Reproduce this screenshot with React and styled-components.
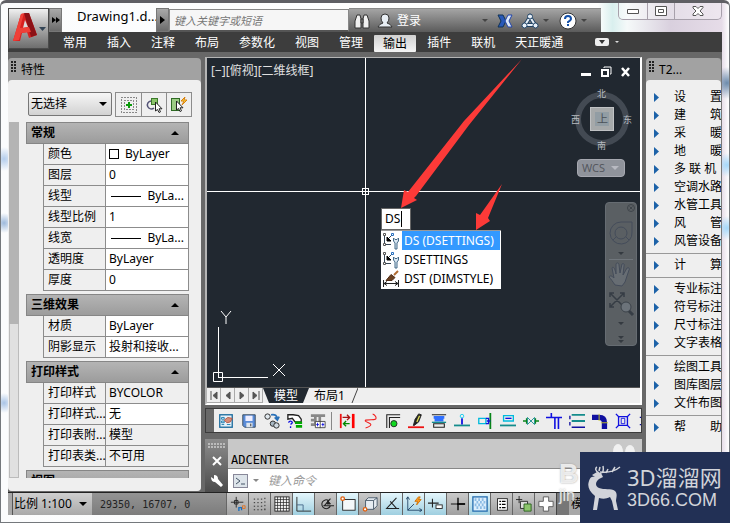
import React from 'react'
import styled, { createGlobalStyle, css } from 'styled-components'

const GlobalStyle = createGlobalStyle`
  * { box-sizing: border-box; }
  body {
    margin: 0;
    font: 12px/18px "Noto Sans", "Noto Sans CJK SC", sans-serif;
    color: #000;
  }
  button, input, select {
    font: inherit;
    color: inherit;
    margin: 0;
    padding: 0;
    border: 0;
    background: none;
    border-radius: 0;
  }
  svg { display: block; flex: none; }
`

const Window = styled.div`
  height: 100vh;
  display: flex;
  flex-direction: column;
  overflow: hidden;
  border: 1px solid #74787c;
  border-top: 3px solid #5f5f64;
  border-radius: 6px 6px 0 0;
  padding: 0 7px 7px;
  background:
    radial-gradient(circle at 3px 156px, #b4cdec 0, transparent 12px),
    radial-gradient(circle at 3px 220px, #9db9dc 0, transparent 10px),
    radial-gradient(circle at 3px 400px, #a9c4e6 0, transparent 10px),
    radial-gradient(circle at 726px 80px, #6c8bab 0, transparent 16px),
    radial-gradient(circle at 726px 162px, #a4d8fa 0, transparent 12px),
    radial-gradient(circle at 726px 225px, #a4d8fa 0, transparent 12px),
    linear-gradient(90deg, #fbfcfd 0, #fff 60%, #fff 82%, #d9efee 84%, #f5f9f9 86%, #d9d0de 92%, #e6dce8 99%, #fff 100%);
`

const Header = styled.header`
  display: grid;
  grid-template-columns: 41px 1fr;
  grid-template-rows: 29px 20px;
  flex: none;
`

const LogoButton = styled.button`
  grid-area: 1 / 1 / 3 / 2;
  z-index: 1;
  height: 41px;
  margin-top: 5px;
  border: 1px solid #4a4a4a;
  background: linear-gradient(#f0f0f0, #a8a8a8 50%, #6e6e6e);
`

const TitleRow = styled.div`
  grid-area: 1 / 2;
  display: flex;
  align-items: flex-end;
`

const DarkArrow = styled.button`
  flex: none;
  width: 13px;
  height: 24px;
  display: flex;
  align-items: center;
  justify-content: center;
  border: 1px solid #777;
  background: linear-gradient(#a9a9a9, #6b6b6b);
`

const DocTitle = styled.h1`
  flex: none;
  width: 94px;
  margin: 0;
  height: 25px;
  padding-left: 15px;
  font-size: 13px;
  font-weight: 400;
  line-height: 18px;
  white-space: nowrap;
`

const Search = styled.input`
  flex: 0 1 180px;
  min-width: 60px;
  height: 23px;
  padding: 0 4px;
  background: #f6f6f6;
  border: 1px solid #888;
  border-bottom: 2px solid #555;
  font-size: 11px;
  font-style: italic;
  &::placeholder { color: #777; opacity: 1; }
`

const InfoBar = styled.div`
  flex: 0 1 252px;
  height: 24px;
  padding: 0 4px;
  display: flex;
  align-items: center;
  color: #fff;
  background: linear-gradient(#a4a4a4, #5b5b5b);
  border-top: 1px solid #8a8a8a;
`

const InfoButton = styled.button`
  display: flex;
  align-items: center;
  justify-content: center;
  width: ${p => p.$w || 24}px;
  gap: 4px;
  white-space: nowrap;
`

const Spacer = styled.div`
  flex: 1;
`

const WindowButtons = styled.div`
  display: flex;
  align-self: flex-start;
  height: 17px;
  border: 1px solid #a7a0ab;
  border-top: 0;
  border-radius: 0 0 5px 5px;
  overflow: hidden;
`

const WindowButton = styled.button`
  width: ${p => p.$w}px;
  display: flex;
  align-items: center;
  justify-content: center;
  background: rgba(255, 255, 255, 0.3);
  & + & { border-left: 1px solid #a7a0ab; }
`

const MenuBar = styled.nav`
  grid-area: 2 / 1 / 3 / 3;
  display: flex;
  gap: 20px;
  padding: 0 0 0 55px;
  background: #3d3d3d;
`

const MenuItem = styled.button`
  height: 20px;
  line-height: 22px;
  color: #fff;
  white-space: nowrap;
  ${p => p.$active && css`
    margin: 3px -9px 0;
    padding: 0 9px;
    height: 17px;
    line-height: 16px;
    color: #000;
    background: linear-gradient(#d0d0d0, #f4f4f4);
    border-radius: 1px;
  `}
`

const RibbonToggle = styled.button`
  display: flex;
  align-items: center;
  gap: 6px;
  margin-left: 12px;
`

const Workspace = styled.main`
  flex: 1;
  min-height: 0;
  display: flex;
  gap: 4px;
  padding-top: 5px;
  background: #686868;
`

const Palette = styled.aside`
  flex: 0 0 ${p => p.$w}px;
  margin: 1px 0;
  display: flex;
  flex-direction: column;
  background: #a2a2a2;
  border-radius: 4px;
  overflow: hidden;
`

const PaletteTitle = styled.h2`
  margin: 0;
  height: 22px;
  flex: none;
  display: flex;
  gap: 5px;
  padding: 3px 3px 0;
  font-size: 12px;
  font-weight: 400;
  line-height: 18px;
`

const Grip = styled.span`
  width: ${p => p.$w || 5}px;
  height: ${p => p.$h || 12}px;
  background: radial-gradient(circle at 1px 1px, ${p => p.$c || '#222'} 0, ${p => p.$c || '#222'} 1px, transparent 1px) 0 0 / 3px 3px;
`

const PaletteBody = styled.div`
  flex: 1;
  min-height: 0;
  display: flex;
  flex-direction: column;
  background: #efefef;
  border-radius: 4px 4px 0 0;
`

const SelectionRow = styled.div`
  display: flex;
  gap: 3px;
  padding: 12px 9px 5px 20px;
`

const SelectBox = styled.span`
  flex: 1;
  height: 24px;
  display: flex;
  align-items: center;
  padding-right: 4px;
  border: 1px solid #777;
  border-radius: 2px;
  background: linear-gradient(#f6f6f6, #d2d2d2);
`

const Select = styled.select`
  flex: 1;
  padding-left: 2px;
  appearance: none;
  outline: 0;
`

const IconGroup = styled.div`
  display: flex;
  border: 1px solid #8c8c8c;
`

const IconButton = styled.button`
  width: 25px;
  height: 23px;
  display: flex;
  align-items: center;
  justify-content: center;
  & + & { border-left: 1px solid #8c8c8c; }
`

const Scroll = styled.div`
  flex: 1;
  min-height: 0;
  display: flex;
  gap: 7px;
  margin: 0 12px 13px 1px;
  overflow: hidden;
`

const Track = styled.div`
  width: 10px;
  background: #e0e0e0;
  border: 1px solid #bbb;
`

const Thumb = styled.div`
  height: 57%;
  margin: -1px;
  background: #b4b4b4;
`

const Groups = styled.div`
  flex: 1;
  display: flex;
  flex-direction: column;
  gap: 3px;
`

const GroupHeader = styled.button`
  width: 100%;
  height: 22px;
  display: flex;
  align-items: center;
  justify-content: space-between;
  padding: 0 9px 0 4px;
  font-weight: 700;
  border: 1px solid #868686;
  background: linear-gradient(#b4b4b4, #9c9c9c);
`

const Props = styled.table`
  width: calc(100% - 17px);
  margin-left: 17px;
  table-layout: fixed;
  border-collapse: separate;
  border-spacing: 0;
  border-left: 1px solid #8c8c8c;
`

const Cell = styled.td`
  height: 21px;
  padding: 0 4px 0 3px;
  line-height: 18px;
  white-space: nowrap;
  border-right: 1px solid #8c8c8c;
  border-bottom: 1px solid #8c8c8c;
  background: ${p => p.$muted ? '#efefef' : '#fff'};
`

const Label = styled(Cell).attrs({ as: 'th', scope: 'row' })`
  width: 62px;
  padding: 0 0 0 4px;
  font-weight: 400;
  text-align: left;
  background: #efefef;
`

const Value = styled.span`
  display: flex;
  align-items: center;
  gap: 6px;
`

const Swatch = styled.span`
  width: 10px;
  height: 10px;
  border: 1px solid #000;
`

const LineSample = styled.span`
  width: 31px;
  height: 1px;
  margin-left: 2px;
  background: #000;
`

const Center = styled.section`
  flex: 1;
  min-width: 0;
  display: flex;
  flex-direction: column;
`

const Viewport = styled.div`
  flex: 1;
  min-height: 0;
  display: flex;
  flex-direction: column;
  border: 2px solid #b5b5b5;
  border-top-width: 1px;
  border-right-color: #fff;
  border-bottom-color: #fff;
`

const Canvas = styled.div`
  position: relative;
  flex: 1;
  min-height: 0;
  background: #212830;
  overflow: hidden;
`

const Drawing = styled.svg`
  position: absolute;
  inset: 0;
  width: 100%;
  height: 100%;
`

const Ucs = styled.svg`
  position: absolute;
  left: 5px;
  bottom: 4px;
`

const ViewLabel = styled.div`
  position: absolute;
  left: 4px;
  top: 4px;
  color: #e0e0e0;
`

const ViewButtons = styled.div`
  position: absolute;
  right: 8px;
  top: 8px;
  display: flex;
  gap: 8px;
`

const Compass = styled.div`
  position: absolute;
  right: 7px;
  top: 29px;
`

const Wcs = styled.button`
  position: absolute;
  right: 15px;
  top: 101px;
  width: 48px;
  height: 18px;
  display: flex;
  align-items: center;
  justify-content: space-between;
  padding: 0 5px 0 4px;
  font-size: 11px;
  color: #55585f;
  background: #8f939b;
  border: 1px solid #a6a8b0;
  border-radius: 4px;
`

const NavBar = styled.div`
  position: absolute;
  right: 3px;
  top: 144px;
  width: 32px;
  height: 144px;
  background: #5a5f63;
  border: 1px solid #666c72;
  border-radius: 4px;
`

const CommandPopup = styled.div`
  position: absolute;
  left: 174px;
  top: 150px;
  width: 120px;
`

const DynBox = styled.div`
  display: flex;
  align-items: center;
  width: 30px;
  height: 22px;
  padding-left: 3px;
  background: #fff;
  border: 1px solid #666;
`

const DynInput = styled.input`
  width: 16px;
  height: 18px;
  outline: 0;
  caret-color: transparent;
`

const TextCaret = styled.span`
  width: 1px;
  height: 16px;
  background: #000;
`

const Suggestions = styled.ul`
  margin: 0;
  padding: 0 1px 1px;
  list-style: none;
  background: #fff;
  border-top: 1px solid #999;
`

const Suggestion = styled.li`
  display: flex;
  align-items: center;
  gap: 2px;
  height: 19px;
`

const SuggestionText = styled.button`
  flex: 1;
  height: 19px;
  padding-left: 2px;
  line-height: 18px;
  text-align: left;
  white-space: nowrap;
  color: ${p => p.$active ? '#fff' : '#000'};
  background: ${p => p.$active ? '#3399ff' : 'none'};
`

const Tabs = styled.div`
  flex: none;
  display: flex;
  height: 16px;
  background: #efefef;
  border-top: 1px solid #555;
`

const TabNav = styled.button`
  width: 14px;
  display: flex;
  align-items: center;
  justify-content: center;
  border: 1px solid #aaa;
  border-width: 0 1px 1px 0;
`

const ModelTab = styled.button`
  width: 46px;
  line-height: 15px;
  color: #fff;
  background: #212830;
  clip-path: polygon(0 0, 100% 0, calc(100% - 6px) 100%, 6px 100%);
`

const LayoutTab = styled.button`
  display: flex;
  gap: 6px;
  padding-left: 5px;
  line-height: 15px;
`

const Toolbar = styled.div`
  flex: none;
  display: flex;
  align-items: center;
  height: 25px;
  margin-top: 3px;
  background: #ededed;
  border: 1px solid #3c3c3c;
  overflow: hidden;
`

const ToolGrip = styled.div`
  flex: none;
  width: 8px;
  height: 100%;
  padding: 3px 1px;
  background: #686868;
`

const Tool = styled.button`
  flex: none;
  width: 23px;
  height: 23px;
  display: flex;
  align-items: center;
  justify-content: center;
`

const ToolSeparator = styled.div`
  flex: none;
  width: 1px;
  height: 18px;
  margin: 0 3px 0 2px;
  background: #888;
`

const CommandLine = styled.div`
  flex: none;
  display: grid;
  grid-template-columns: 23px 1fr;
  height: 53px;
  margin-top: 6px;
`

const CommandSide = styled.div`
  display: flex;
  flex-direction: column;
  align-items: center;
  gap: 8px;
  padding-top: 4px;
  background: linear-gradient(#8c8c8c, #4c4c4c);
`

const CommandMain = styled.div`
  display: flex;
  flex-direction: column;
  min-width: 0;
`

const History = styled.div`
  flex: 1;
  display: flex;
  align-items: flex-end;
  padding: 0 3px;
  background: #c8c8c8;
  border-bottom: 1px solid #888;
  font: 12px/16px "DejaVu Sans Mono", monospace;
`

const Prompt = styled.label`
  height: 23px;
  display: flex;
  align-items: center;
  gap: 5px;
  padding: 0 5px;
  background: #fff;
`

const PromptInput = styled.input`
  flex: 1;
  min-width: 0;
  padding-left: 4px;
  font-style: italic;
  &::placeholder { color: #999; opacity: 1; }
`

const MenuPalette = styled(Palette)`
  margin-bottom: 0;
  border-right: 1px solid #777;
`

const MenuList = styled.ul`
  margin: 0;
  padding: 8px 0;
  list-style: none;
`

const MenuEntry = styled.li`
  ${p => p.$rule && css`
    margin-top: 3px;
    padding-top: 2px;
    border-top: 1px solid #999;
  `}
`

const EntryButton = styled.button`
  display: flex;
  align-items: center;
  gap: 14px;
  height: 18px;
  padding-left: 8px;
  white-space: pre;
`

const StatusBar = styled.footer`
  flex: none;
  height: 23px;
  display: flex;
  overflow: hidden;
  background: #a8a8a8;
  border-top: 1px solid #222;
`

const Scale = styled.button`
  display: flex;
  align-items: center;
  gap: 7px;
  width: 80px;
  margin-left: 4px;
  padding-left: 1px;
  white-space: nowrap;
  background: linear-gradient(#cfcfcf, #a9a9a9);
  border-left: 1px solid #555;
`

const Coords = styled.output`
  flex: 0 0 134px;
  padding-left: 8px;
  font: 10px/24px "DejaVu Sans Mono", monospace;
  white-space: pre;
  color: #222;
  background: linear-gradient(#949494, #7c7c7c);
`

const StatusButton = styled.button`
  flex: none;
  width: 22px;
  display: flex;
  align-items: center;
  justify-content: center;
  border-left: 1px solid #666;
  background: ${p => p.$on ? 'linear-gradient(#e4f6fc, #9fcfe0)' : 'linear-gradient(#cacaca, #a0a0a0)'};
`

const StatusText = styled.button`
  padding-left: 2px;
  white-space: nowrap;
`

const StatusGap = styled.div`
  flex: 0 0 13px;
  background: #777;
  border-left: 1px solid #444;
`

const Ghost = styled.div`
  position: absolute;
  right: 151px;
  bottom: 17px;
  width: 20px;
  color: rgba(255, 255, 255, 0.8);
  font: 700 27px/24px "Liberation Sans", sans-serif;
  text-shadow: 0 0 2px #999;
`

const GhostSmall = styled.div`
  font: 16px/20px "Liberation Sans", sans-serif;
`

const GhostPaw = styled.svg`
  position: absolute;
  right: 94px;
  bottom: 60px;
`

const Brand = styled.div`
  position: absolute;
  right: 0;
  bottom: 0;
  width: 150px;
  height: 71px;
  display: flex;
  align-items: center;
  gap: 5px;
  padding-left: 8px;
  color: #d2d4da;
  background: #223055;
  overflow: hidden;
`

const BrandName = styled.div`
  font: 22px/25px "Noto Sans", "Noto Sans CJK SC", sans-serif;
  white-space: nowrap;
`

const BrandUrl = styled.div`
  font: 18px/20px "Liberation Sans", sans-serif;
`

const Caret = ({ color = '#000', size = 8, up }) => (
  <svg width={size} height={size / 2} viewBox='0 0 8 4'>
    <path d={up ? 'M0 4L4 0l4 4z' : 'M0 0h8L4 4z'} fill={color} />
  </svg>
)

const Icon = ({ children, size = 18 }) => (
  <svg width={size} height={size} viewBox='0 0 18 18' fill='none' stroke='#222'>{children}</svg>
)

const Plus = () => (
  <Icon>
    <rect x='1.5' y='1.5' width='15' height='15' strokeDasharray='1 2' />
    <rect x='4.5' y='4.5' width='9' height='9' strokeDasharray='1 2' />
    <path d='M9 6v6M6 9h6' stroke='#0a9a0a' strokeWidth='2' />
  </Icon>
)

const PickObjects = () => (
  <Icon>
    <path d='M6 5a4 4 0 1 0 3 7' stroke='#557' strokeWidth='1.5' />
    <rect x='6.5' y='2.5' width='6' height='6' fill='#8cc46c' stroke='#3b7a2a' />
    <path d='M10.5 6v9l2-1.500 1.500 3 1.500-.7-1.500-3H17z' fill='#fff' />
  </Icon>
)

const QuickSelect = () => (
  <Icon>
    <rect x='1.5' y='2.5' width='8' height='12' fill='#9ccc84' stroke='#2e6a24' />
    <path d='M15 1l-4 4h3l-2 4 5-5h-3z' fill='#ffe040' stroke='#d88010' />
    <path d='M6.5 5v9l2-1.500 1.500 3 1.500-.7-1.500-3H13z' fill='#fff' />
  </Icon>
)

const groups = [
  {
    title: '常规',
    rows: [
      ['颜色', <><Swatch />ByLayer</>],
      ['图层', '0'],
      ['线型', <><LineSample />ByLa...</>],
      ['线型比例', '1'],
      ['线宽', <><LineSample />ByLa...</>],
      ['透明度', 'ByLayer'],
      ['厚度', '0']
    ]
  },
  {
    title: '三维效果',
    rows: [['材质', 'ByLayer'], ['阴影显示', '投射和接收...']]
  },
  {
    title: '打印样式',
    rows: [
      ['打印样式', 'BYCOLOR', true],
      ['打印样式...', '无'],
      ['打印表附...', '模型', true],
      ['打印表类...', '不可用', true]
    ]
  },
  { title: '视图', rows: [] }
]

const menus = ['常用', '插入', '注释', '布局', '参数化', '视图', '管理', '输出', '插件', '联机', '天正暖通']

const entries = [
  ['设\u3000\u3000置'], ['建\u3000\u3000筑'], ['采\u3000\u3000暖'], ['地\u3000\u3000暖'],
  ['多 联 机'], ['空调水路'], ['水管工具'], ['风\u3000\u3000管'], ['风管设备'],
  ['计\u3000\u3000算', true],
  ['专业标注', true], ['符号标注'], ['尺寸标注'], ['文字表格'],
  ['绘图工具', true], ['图库图层'], ['文件布图'],
  ['帮\u3000\u3000助', true]
]

const teal = '#148c8c'
const blue = '#1010e0'

const tools = [
  ['图纸', <><rect x='2' y='2' width='14' height='14' fill='#e8f2fa' stroke='#1a6a9c' strokeWidth='1.5' /><path d='M4 5h3v2H4zM4 9h3v2H4zM4 13h3M10 13h4' stroke='#17a' /><path d='M7 8l4-3 5 1-2 4-4 1z' fill='#d88c78' stroke='#a54' /></>],
  ['保存', <><path d='M2 2h14v14H4l-2-2z' fill='#5a8cd8' stroke='#345' /><rect x='5' y='3' width='8' height='6' fill='#eef' stroke='none' /><rect x='6' y='11' width='7' height='5' fill='#dfe6ee' stroke='none' /><path d='M11 12v3' /></>],
  ['替换', <><circle cx='4' cy='4' r='3' fill='#e0e8ee' /><circle cx='10' cy='12' r='3' fill='#a8b8c4' /><circle cx='14' cy='14' r='3' fill='#d0dae2' /><path d='M8 2c4-1 7 1 7 5m-3-2l3 3 2-4' stroke='#2870b8' strokeWidth='2' /></>],
  ['查询', <><path d='M1 7V2h6l6 1 3 4v3H9L6 6z' fill='#fff' strokeWidth='1.5' /><path d='M9 11h8M10 15h7' stroke='#0a0' strokeWidth='3' /><path d='M2 11c0-3 4-2 4 0l-2 2m0 2v2' stroke={blue} strokeWidth='1.5' /></>],
  ['表格', <><path d='M1 3h16M1 8h5m5-6v8M6 3v9M1 13h5' stroke='#888' strokeWidth='3' /><path d='M6 9.500h11v7H6zM11.500 9v8' fill='#fff' stroke='#444' /><path d='M7 13h3m3 0h3m-7.500-2v4m6-4v4' stroke={blue} /></>],
  ['对齐', <><path d='M2 1v16' stroke='#e11' strokeWidth='2' /><path d='M16 1v16' stroke='#f00' strokeWidth='3' /><path d='M4 5h8M9 2l3 3-3 3' stroke='#a11' strokeWidth='1.5' /><path d='M12 12H5m3-3l-3 3 3 3' stroke='#080' strokeWidth='1.5' /></>],
  ['曲线', <path d='M12 1c3 1 5 5 3 6s-7 0-11 1c-2 2 6 3 6 5s-3 3-6 4' stroke='#f02020' strokeWidth='1.2' />],
  ['墙角', <><path d='M2 17V2h15M5 17V5h12' strokeWidth='1.2' /><circle cx='10' cy='12' r='3.5' fill='#10d820' /></>],
  ['标记', <><path d='M0 16h18' stroke='#e11' strokeWidth='2' /><path d='M6 14l2-7 4-6 3 1-3 8-5 4z' fill='#222' /><path d='M13 3l-3 7' stroke='#dd5' strokeWidth='1.5' /></>],
  ['设备', <><path d='M1 2h16M3 12h12v4H3z' strokeWidth='1.2' /><path d='M3 5h12M4 8h10' stroke='#3070ff' strokeWidth='3' /><path d='M1 10.500h16' stroke={teal} strokeWidth='1.5' /></>],
  ['立管', <><path d='M0 14h18' stroke={teal} strokeWidth='2' /><path d='M9 13V6' stroke={blue} strokeWidth='2' /><circle cx='9' cy='3.5' r='2' stroke='#1ce' /></>],
  ['侧接', <><path d='M15 0v18' stroke='#088418' strokeWidth='2' /><path d='M2 6h8v6H2z' stroke='#0bd' strokeWidth='1.5' /><path d='M10 6h3v6h-3M11 9h4' stroke={blue} strokeWidth='1.5' /></>],
  ['平接', <><path d='M0 14h18' stroke={teal} strokeWidth='2' /><path d='M4 3h11v6H4z' stroke='#0bd' strokeWidth='1.5' /><path d='M6 6h7' stroke={blue} strokeWidth='1.5' /></>],
  ['阀门', <><path d='M0 9h5m8 0h5M4 6v6m10-6v6' stroke='#088418' strokeWidth='1.5' /><path d='M5 5v8l8-8v8z' stroke={teal} /></>],
  ['三通', <path d='M0 5h18M6 0v5h4v13M14 5v13' stroke={blue} strokeWidth='1.8' />],
  ['管线', <><path d='M3 2h15M3 9h15' stroke={teal} strokeWidth='2' /><path d='M3 16h15M1 3v4m0 3v4' stroke='#1010a0' strokeWidth='1.5' /></>],
  ['弯头', <><path d='M0 5h8q6 0 6 6v7' stroke='#1010a0' strokeWidth='6' /><path d='M8 1v8M10 11h8' stroke='#cc2' /></>],
  ['风口', <><path d='M4 4h10v10H4zM1 1l4 4m12-4l-4 4M1 17l4-4m12 4l-4-4' stroke={blue} strokeWidth='1.5' /><path d='M7 6h4v6H7z' stroke={blue} /></>],
  ['更多', <path d='M2 5h15M2 13h15' stroke='#1010a0' strokeWidth='1.5' />]
]

const statusTools = [
  ['推断约束', false, <><path d='M1 7h14M7 1v12M5 5h4v4H5z' /><path d='M10 17v-4h3v3' stroke='#1b6fc0' strokeWidth='1.5' /><path d='M14 11h3v3h-3z' stroke='#e07020' /></>],
  ['捕捉', false, <path d='M2 3.500h10M2 7.500h10M2 11.500h10M2 15.500h13M14.500 2v14' strokeDasharray='1.5 2.500' />],
  ['栅格', false, <><rect x='1' y='1' width='16' height='16' fill='#f4f4f4' /><path d='M4 1v16M7.300 1v16M10.600 1v16M14 1v16M1 4h16M1 7.300h16M1 10.600h16M1 14h16' strokeWidth='.8' /></>],
  ['正交', true, <><path d='M1 1v16h16' /><path d='M1 10h7v7' stroke='#468' /></>],
  ['极轴', false, <><path d='M12 5a5 5 0 1 0 2 6M6 11h12M7 11l7-8' strokeWidth='1.2' /><path d='M11 5l3 4h-4z' fill='#222' /></>],
  ['对象捕捉', true, <><rect x='3' y='4' width='14' height='12' fill='#f4f8fa' /><circle cx='3' cy='3' r='2' fill='#fff' stroke='#e06010' strokeWidth='1.5' /></>],
  ['三维捕捉', false, <><path d='M4 5l3-3h10v9l-4 4H4z' fill='#e6ecf2' stroke='#456' /><path d='M4 5h9v10M13 5l4-3' stroke='#456' /><circle cx='3.5' cy='15' r='2' stroke='#e06010' fill='#fff' strokeWidth='1.5' /></>],
  ['追踪', true, <path d='M14 2L3 14h14M7 6l7 8' strokeWidth='1.2' />],
  ['动态UCS', true, <><path d='M2 1v15h16M0 4l2-3 2 3M15 14l3 2-3 2M2 16L9 9' stroke='#246' /><path d='M14 1l-4 5h3l-1 4 5-6h-3l2-3z' fill='#ff9c20' stroke='#d07000' /></>],
  ['动态输入', true, <><path d='M0 8h12M5 3v10' strokeWidth='1.2' /><rect x='9' y='10' width='7' height='4' fill='#fff' /></>],
  ['线宽', false, <><path d='M1 9h7' stroke='#000' /><path d='M8 9h9' stroke='#000' strokeWidth='2' /><path d='M9 2v14' stroke='#000' strokeWidth='1.5' /></>],
  ['透明度', true, <><rect x='1' y='1' width='16' height='16' fill='#dceefc' stroke='#2870b0' strokeWidth='1.5' /><path d='M3 4h12M5 7h10M3 10h12M5 13h10' stroke='#8cbce4' strokeWidth='3' strokeDasharray='2 2' /></>],
  ['快捷特性', false, <><rect x='4' y='3' width='11' height='13' fill='#fff' /><path d='M6 6h2m1 0h4M6 9.500h2m1 0h4M6 13h2m1 0h4' stroke='#000' strokeWidth='1.5' /></>],
  ['选择循环', false, <><path d='M0 4h7M3.500 0v8' /><path d='M5 6h8v8H5z' fill='#ddd' /><path d='M9 9h8v8H9z' fill='#8cc46c' stroke='#28601c' /></>],
  ['注释监视', false, <path d='M6 1h6v5h5v6h-5v5H6v-5H1V6h5z' fill='#fff' stroke='#555' />]
]

const commands = [
  ['DS (DSETTINGS)', 'settings'],
  ['DSETTINGS', 'settings'],
  ['DST (DIMSTYLE)', 'dim']
]

const CommandIcon = ({ type }) => type === 'settings'
  ? (
    <Icon>
      <path d='M2.500 3v9.500H9M10 3L6 7' stroke='#345' />
      <path d='M5 5v4h4z' fill='#000' stroke='#000' />
      <path d='M1.500 1.500h2v2h-2zM1.500 11.500h2v2h-2z' fill='#fff' stroke='#555' />
      <path d='M9.500 1.500h2v2h-2z' fill='#fff' stroke='#2870c0' />
      <path d='M11.500 6v3l1.500 2v6h2v-6l1.500-2V6L15 7.500h-2z' fill='#dbe8f2' stroke='#456a88' />
    </Icon>
    )
  : (
    <Icon>
      <path d='M1.500 10v7M16.500 10v7M1 13.500h16M5 11.500l-3 2 3 2m8-4l3 2-3 2' />
      <path d='M4 10.500l5-6 4 3-3 3z' fill='#6a4020' stroke='#53301a' />
      <path d='M12 5l4-4' stroke='#b06a30' strokeWidth='2' />
    </Icon>
    )

const AppLogo = () => (
  <svg width='39' height='39' viewBox='0 0 39 39'>
    <path d='M4 32l8-27 8-1 8 22-8 3-2-6-5 1-2 8z' fill='#d82020' />
    <path d='M15 4h5l8 22-6 2z' fill='#8c1116' />
    <path d='M14 19l2-8 3 7z' fill='#ddd' />
    <path d='M4 32l8-27 3-1-4 15 9-1 2 5-10 1-2 7z' fill='#ef4038' />
    <path d='M30 18h7l-3.500 4z' fill='#345' />
  </svg>
)

const Ring = () => (
  <svg width='62' height='66' viewBox='0 0 62 66' fontFamily='Noto Sans CJK SC, sans-serif' fontSize='9' fill='#b8bcc0'>
    <circle cx='31' cy='32' r='24' fill='none' stroke='#434a53' strokeWidth='6' />
    <rect x='19.5' y='20.5' width='23' height='23' fill='#a6a9aa' stroke='#c0c2c4' />
    <rect x='24' y='25' width='14' height='14' fill='#929da4' />
    <text x='26' y='36' fontSize='11' fill='#4a5158'>上</text>
    <text x='26' y='10'>北</text>
    <text x='26' y='62'>南</text>
    <text x='0' y='36'>西</text>
    <text x='52' y='36'>东</text>
  </svg>
)

const NavIcons = () => (
  <svg width='30' height='142' viewBox='0 0 30 142' fill='none' stroke='#70767c'>
    <circle cx='25' cy='5' r='3.5' stroke='#3e444a' />
    <path d='M23.500 3.500l3 3m0-3l-3 3' stroke='#3e444a' />
    <path d='M15 19h11v10a11 11 0 1 1-11-10z' stroke='#444c5a' />
    <circle cx='15' cy='30' r='6' stroke='#444c5a' />
    <path d='M7 37l3-3m13 3l-3-3' stroke='#444c5a' />
    <path d='M12 49h6l-3 3z' fill='#343a40' stroke='none' />
    <path d='M3 56.500h24' />
    <path d='M9 82c-2-3-4-6-6-8 1-2 3-1 5 1L6 65c1-2 3 0 4 6l0-10c1-2 3-1 3 1l1 8 2-9c1-1 3 0 2 2l-1 9 4-7c2-1 3 1 2 2l-4 12-3 4z' fill='#676d73' stroke='#444c5a' />
    <path d='M4 90l14 14M18 90L4 104M4 94v-4h4m6 0h4v4M4 100v4h4' stroke='#363d45' strokeWidth='1.5' />
    <circle cx='20' cy='104' r='5' fill='#6c737a' stroke='#3c434a' />
    <path d='M23 108l4 4' stroke='#363d45' strokeWidth='3' />
    <path d='M12 119h6l-3 3zM12 133h6l-3 3zM12 137h6l-3 3z' fill='#343a40' stroke='none' />
  </svg>
)

const Deer = () => (
  <svg width='34' height='46' viewBox='0 0 34 46' fill='#d2d4da'>
    <path d='M4 10l5-3 4 1 2 4-4 2c-4 3-4 7 0 9 5 2 12 0 16 3 3 3 1 7 1 10l2 9h-4l-2-9-2-4c-4 2-7 2-11 1l-2 12H5l2-14c-6-5-8-10-6-15 1-4 3-5 6-4z' />
    <path d='M11 8C7 6 7 3 9 2m3 6c3 0 4-2 3-7m-3 6c8 1 14 0 20-5M18 8l2-4m4 3l3-5M11 6l1-4' fill='none' stroke='#d2d4da' strokeWidth='1.5' />
  </svg>
)

const Properties = () => (
  <Palette $w={193}>
    <PaletteTitle><Grip />特性</PaletteTitle>
    <PaletteBody>
      <SelectionRow>
        <SelectBox>
          <Select aria-label='选择对象'><option>无选择</option></Select>
          <Caret />
        </SelectBox>
        <IconGroup>
          <IconButton aria-label='PICKADD'><Plus /></IconButton>
          <IconButton aria-label='选择对象'><PickObjects /></IconButton>
          <IconButton aria-label='快速选择'><QuickSelect /></IconButton>
        </IconGroup>
      </SelectionRow>
      <Scroll>
        <Track><Thumb /></Track>
        <Groups>
          {groups.map(group => (
            <section key={group.title}>
              <GroupHeader>{group.title}<Caret up /></GroupHeader>
              <Props>
                <tbody>
                  {group.rows.map(([label, value, muted]) => (
                    <tr key={label}>
                      <Label>{label}</Label>
                      <Cell $muted={muted}><Value>{value}</Value></Cell>
                    </tr>
                  ))}
                </tbody>
              </Props>
            </section>
          ))}
        </Groups>
      </Scroll>
    </PaletteBody>
  </Palette>
)

const Model = () => (
  <Canvas>
    <ViewLabel>[−][俯视][二维线框]</ViewLabel>
    <ViewButtons>
      <svg width='12' height='12'><path d='M1 7h10v3H1z' fill='#fff' /></svg>
      <svg width='12' height='12' fill='none' stroke='#fff'><path d='M4 2V1h7v7h-1' /><path d='M2 4h6v6H2z' strokeWidth='2' /></svg>
      <svg width='12' height='12'><path d='M2 2l7 8M9 2l-7 8' stroke='#fff' strokeWidth='2.5' /></svg>
    </ViewButtons>
    <Compass><Ring /></Compass>
    <Wcs>WCS<Caret color='#b8bac2' /></Wcs>
    <NavBar><NavIcons /></NavBar>
    <Ucs width='84' height='76' fill='none' stroke='#fff'>
      <path d='M1.500 65.500h9v9h-9zM6.500 70V20M6 70.500h50M9 4l5 6 5-6M14 10v7M61 57l12 12M73 57L61 69' />
    </Ucs>
    <Drawing stroke='#fff' fill='none' shapeRendering='crispEdges'>
      <line x1='158.5' x2='158.5' y1='0' y2='100%' />
      <line x1='0' x2='100%' y1='133.5' y2='133.5' />
      <rect x='155.5' y='130.5' width='6' height='6' />
    </Drawing>
    <CommandPopup>
      <DynBox>
        <DynInput aria-label='命令' defaultValue='DS' />
        <TextCaret />
      </DynBox>
      <Suggestions>
        {commands.map(([text, type], i) => (
          <Suggestion key={text}>
            <CommandIcon type={type} />
            <SuggestionText $active={i === 0}>{text}</SuggestionText>
          </Suggestion>
        ))}
      </Suggestions>
    </CommandPopup>
    <Drawing fill='#fc3a38' pointerEvents='none'>
      <path d='M194 150l3-18 4 2 56-71L315 1l-53 66-53 71-2 2 3 2zM269 172v-17l4 2 22-31-14 34 2 3z' />
    </Drawing>
  </Canvas>
)

const App = () => (
  <Window>
    <GlobalStyle />
    <Header>
      <LogoButton aria-label='AutoCAD'><AppLogo /></LogoButton>
      <TitleRow>
        <DarkArrow aria-label='快速访问'><svg width='8' height='6'><path d='M0 0l4 3-4 3zM4 0l4 3-4 3z' /></svg></DarkArrow>
        <DocTitle>Drawing1.d...</DocTitle>
        <DarkArrow aria-label='展开'><svg width='5' height='8'><path d='M0 0l5 4-5 4z' /></svg></DarkArrow>
        <Search aria-label='搜索' placeholder='键入关键字或短语' />
        <InfoBar>
          <InfoButton $w={18} aria-label='查找'>
            <svg width='16' height='16' fill='#f0f0f0' stroke='#333'><path d='M3 2h3l1 4v9H1V8zM10 2h3l2 6v7H9V6zM7 6h2v4H7z' /></svg>
          </InfoButton>
          <InfoButton $w={56}>
            <svg width='16' height='16' fill='#e8eef4' stroke='#333'><path d='M1 14q1-3 5-4Q4 8 4 5q0-4 4-4t4 4q0 3-2 5 4 1 5 4z' /></svg>
            登录
          </InfoButton>
          <Spacer />
          <InfoButton $w={8} aria-label='账户'><Caret color='#444' size={6} /></InfoButton>
          <InfoButton $w={32} aria-label='Exchange'>
            <svg width='16' height='14'><path d='M1 1h5l3 6-3 6H1l3-6z' fill='#2858b8' stroke='#135' /><path d='M15 1h-4L8 7l3 6h4l-3-6z' fill='#dce8f8' stroke='#24a' /></svg>
          </InfoButton>
          <InfoButton $w={28} aria-label='联网'>
            <svg width='18' height='16' fill='#e8f0f8' stroke='#246'><path d='M9 4L4 12h10z' fill='none' stroke='#246' strokeWidth='4' /><path d='M9 4L4 12h10z' fill='none' stroke='#e8f0f8' strokeWidth='2' /><circle cx='9' cy='3.5' r='2.5' /><circle cx='3.5' cy='12.5' r='2.5' /><circle cx='14.5' cy='12.5' r='2.5' /></svg>
            <Caret color='#444' size={6} />
          </InfoButton>
          <InfoButton $w={48} aria-label='帮助'>
            <svg width='18' height='18'><circle cx='9' cy='9' r='8' fill='#fff' stroke='#333' /><path d='M6 7q0-3 3-3t3 3q0 1-3 3v1' fill='none' stroke='#1450a8' strokeWidth='2' /><path d='M8 12h2v2H8z' fill='#1450a8' /></svg>
            <Caret color='#444' size={6} />
          </InfoButton>
        </InfoBar>
        <Spacer />
        <WindowButtons>
          <WindowButton $w={28} aria-label='最小化'><svg width='12' height='5'><path d='M.5.500h11v4H.5z' fill='#fff' stroke='#555' /></svg></WindowButton>
          <WindowButton $w={27} aria-label='最大化'><svg width='12' height='10' fill='#fff' stroke='#555'><path d='M.5.500h11v9H.5z' /><path d='M3.500 3.500h5v3h-5z' /></svg></WindowButton>
          <WindowButton $w={47} aria-label='关闭'><svg width='12' height='10'><path d='M1 .5h3l2 2 2-2h3v1L8 5l3 3v1.500H8l-2-2-2 2H1V8l3-3-3-3z' fill='#fff' stroke='#555' /></svg></WindowButton>
        </WindowButtons>
      </TitleRow>
      <MenuBar>
        {menus.map(name => <MenuItem key={name} $active={name === '输出'}>{name}</MenuItem>)}
        <RibbonToggle aria-label='功能区'>
          <svg width='14' height='8'><rect width='14' height='8' rx='2' fill='#eee' /><path d='M4 2h6L7 6z' fill='#333' /></svg>
          <Caret color='#ddd' size={4} />
        </RibbonToggle>
      </MenuBar>
    </Header>

    <Workspace>
      <Properties />
      <Center>
        <Viewport>
          <Model />
          <Tabs>
            {['M1 0v9M7 1L3 4.500 7 8z', 'M6 1L2 4.500 6 8z', 'M2 1l4 3.500L2 8z', 'M1 1l4 3.500L1 8zM7 0v9'].map((d, i) => (
              <TabNav key={d} aria-label={['首个', '上一个', '下一个', '末个'][i]}>
                <svg width='8' height='9' fill='#555' stroke='#555'><path d={d} /></svg>
              </TabNav>
            ))}
            <ModelTab>模型</ModelTab>
            <LayoutTab>布局1<svg width='7' height='15' stroke='#444'><path d='M7 0L1 15' /></svg></LayoutTab>
          </Tabs>
        </Viewport>
        <Toolbar>
          <ToolGrip><Grip $h={15} /></ToolGrip>
          {tools.map(([name, art], i) => (
            <React.Fragment key={name}>
              {i === 5 && <ToolSeparator />}
              <Tool aria-label={name}><Icon size={16}>{art}</Icon></Tool>
            </React.Fragment>
          ))}
        </Toolbar>
        <CommandLine>
          <CommandSide>
            <Grip $w={17} $h={5} $c='#bbb' />
            <svg width='10' height='10'><path d='M1 1l8 8M9 1L1 9' stroke='#fff' strokeWidth='2' /></svg>
            <svg width='14' height='14'><path d='M1 3l3 2V1q4 0 4 4l5 6-2 2-6-5q-4 0-4-5z' fill='#fff' /></svg>
          </CommandSide>
          <CommandMain>
            <History>ADCENTER</History>
            <Prompt>
              <svg width='15' height='14' fill='none'><rect x='.5' y='.5' width='14' height='13' fill='#dde4ea' stroke='#889' /><path d='M3 4l4 3-4 3M8 10h4' stroke='#456' /></svg>
              <Caret color='#888' size={6} />
              <PromptInput aria-label='命令行' placeholder='键入命令' />
            </Prompt>
          </CommandMain>
        </CommandLine>
      </Center>
      <MenuPalette $w={76}>
        <PaletteTitle><Grip />T2...</PaletteTitle>
        <PaletteBody>
          <MenuList>
            {entries.map(([text, rule]) => (
              <MenuEntry key={text} $rule={rule}>
                <EntryButton>
                  <svg width='6' height='9'><path d='M0 0l5 4.500L0 9z' fill='#1c62a8' /></svg>
                  {text}
                </EntryButton>
              </MenuEntry>
            ))}
          </MenuList>
        </PaletteBody>
      </MenuPalette>
    </Workspace>

    <StatusBar>
      <Scale>比例 1:100<Caret /></Scale>
      <Coords>29350, 16707, 0</Coords>
      {statusTools.map(([name, on, art]) => (
        <StatusButton key={name} $on={on} aria-label={name}><Icon size={16}>{art}</Icon></StatusButton>
      ))}
      <StatusGap />
      <StatusText>模型</StatusText>
    </StatusBar>

    <GhostPaw width='24' height='20' fill='rgba(255,255,255,0.75)'><ellipse cx='6' cy='9' rx='5' ry='8' /><ellipse cx='18' cy='10' rx='5' ry='8' /></GhostPaw>
    <Ghost>B<GhostSmall>jin</GhostSmall></Ghost>
    <Brand>
      <Deer />
      <div>
        <BrandName>3D溜溜网</BrandName>
        <BrandUrl>3D66.COM</BrandUrl>
      </div>
    </Brand>
  </Window>
)

export default App
